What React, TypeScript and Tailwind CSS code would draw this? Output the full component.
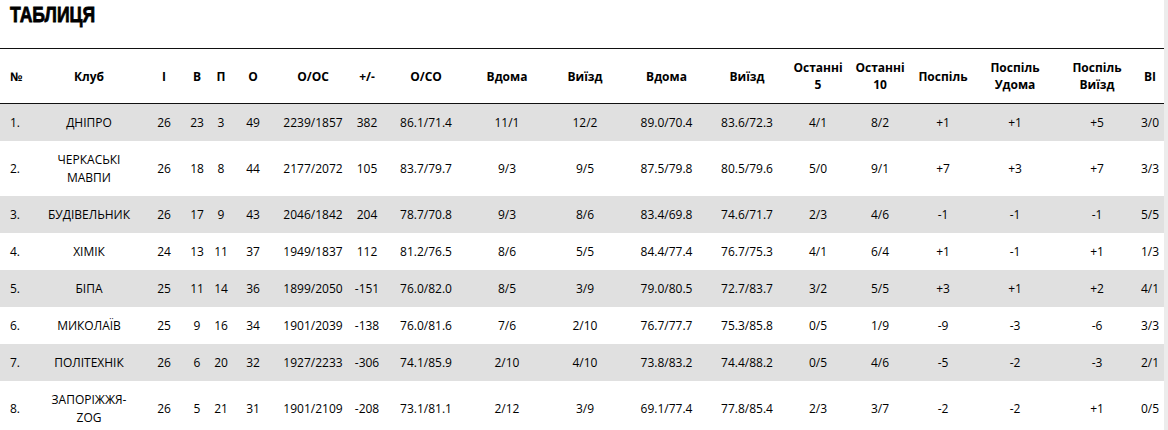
const cols = [
  { label: '№', cls: 'justify-start pl-[10px]' },
  { label: 'Клуб', cls: 'justify-center pl-[11px]' },
  { label: 'І', cls: 'justify-center pl-[21px]' },
  { label: 'В', cls: 'justify-center pl-[5px]' },
  { label: 'П', cls: 'justify-center pr-[4px]' },
  { label: 'О', cls: 'justify-center pr-[14px]' },
  { label: 'О/ОС', cls: 'justify-center pl-[3px]' },
  { label: '+/-', cls: 'justify-center pr-[2px]' },
  { label: 'О/СО', cls: 'justify-center pr-[10px]' },
  { label: 'Вдома', cls: 'justify-center pl-[2px]' },
  { label: 'Виїзд', cls: 'justify-center pr-[2px]' },
  { label: 'Вдома', cls: 'justify-center' },
  { label: 'Виїзд', cls: 'justify-center pl-[5px]' },
  { label: 'Останні\n5', cls: 'justify-center pl-[5px]' },
  { label: 'Останні\n10', cls: 'justify-center' },
  { label: 'Поспіль', cls: 'justify-center pr-[4px]' },
  { label: 'Поспіль\nУдома', cls: 'justify-center pr-[5px]' },
  { label: 'Поспіль\nВиїзд', cls: 'justify-center pl-[15px]' },
  { label: 'ВІ', cls: 'justify-center pl-[13px]' },
]

const rows: string[][] = [
  ['1.', 'ДНІПРО', '26', '23', '3', '49', '2239/1857', '382', '86.1/71.4', '11/1', '12/2', '89.0/70.4', '83.6/72.3', '4/1', '8/2', '+1', '+1', '+5', '3/0'],
  ['2.', 'ЧЕРКАСЬКІ\nМАВПИ', '26', '18', '8', '44', '2177/2072', '105', '83.7/79.7', '9/3', '9/5', '87.5/79.8', '80.5/79.6', '5/0', '9/1', '+7', '+3', '+7', '3/3'],
  ['3.', 'БУДІВЕЛЬНИК', '26', '17', '9', '43', '2046/1842', '204', '78.7/70.8', '9/3', '8/6', '83.4/69.8', '74.6/71.7', '2/3', '4/6', '-1', '-1', '-1', '5/5'],
  ['4.', 'ХІМІК', '24', '13', '11', '37', '1949/1837', '112', '81.2/76.5', '8/6', '5/5', '84.4/77.4', '76.7/75.3', '4/1', '6/4', '+1', '-1', '+1', '1/3'],
  ['5.', 'БІПА', '25', '11', '14', '36', '1899/2050', '-151', '76.0/82.0', '8/5', '3/9', '79.0/80.5', '72.7/83.7', '3/2', '5/5', '+3', '+1', '+2', '4/1'],
  ['6.', 'МИКОЛАЇВ', '25', '9', '16', '34', '1901/2039', '-138', '76.0/81.6', '7/6', '2/10', '76.7/77.7', '75.3/85.8', '0/5', '1/9', '-9', '-3', '-6', '3/3'],
  ['7.', 'ПОЛІТЕХНІК', '26', '6', '20', '32', '1927/2233', '-306', '74.1/85.9', '2/10', '4/10', '73.8/83.2', '74.4/88.2', '0/5', '4/6', '-5', '-2', '-3', '2/1'],
  ['8.', 'ЗАПОРІЖЖЯ-\nZOG', '26', '5', '21', '31', '1901/2109', '-208', '73.1/81.1', '2/12', '3/9', '69.1/77.4', '77.8/85.4', '2/3', '3/7', '-2', '-2', '+1', '0/5'],
]

const grid =
  'grid grid-cols-[40px_87px_53px_29px_28px_46px_57px_56px_70px_80px_80px_81px_75px_67px_62px_68px_77px_67px_41px]'

export default function App() {
  return (
    <div className="flex w-[1168px] h-[430px] overflow-hidden bg-white text-black font-['Open_Sans','DejaVu_Sans',sans-serif] text-[12px]">
      <div className="w-[1164px] shrink-0">
        {/* заголовок */}
        <div className="h-[48px] pl-[10px] pt-[4px]">
          <h2 className="inline-block origin-left scale-x-[0.8] text-[22px] leading-none font-bold text-black [-webkit-text-stroke:0.8px_black] font-['Liberation_Sans','Arial',sans-serif]">
            ТАБЛИЦЯ
          </h2>
        </div>

        {/* шапка таблиці */}
        <div className={`${grid} h-[56px] border-y border-[#111] font-bold leading-[17px]`}>
          {cols.map((c, i) => (
            <div key={i} className={`flex items-center whitespace-pre-line text-center ${c.cls}`}>
              {c.label}
            </div>
          ))}
        </div>

        {/* рядки */}
        {rows.map((r, ri) => {
          const tall = r[1].includes('\n')
          return (
            <div
              key={ri}
              className={`${grid} leading-[18px] font-[500] ${tall ? 'h-[55px]' : 'h-[37px]'} ${ri % 2 === 0 ? 'bg-[#e0e0e0]' : 'bg-white'}`}
            >
              {r.map((v, ci) => (
                <div key={ci} className={`flex items-center whitespace-pre-line text-center ${cols[ci].cls}`}>
                  {v}
                </div>
              ))}
            </div>
          )
        })}
      </div>
      <div className="flex-1 bg-[#ececec]" />
    </div>
  )
}
